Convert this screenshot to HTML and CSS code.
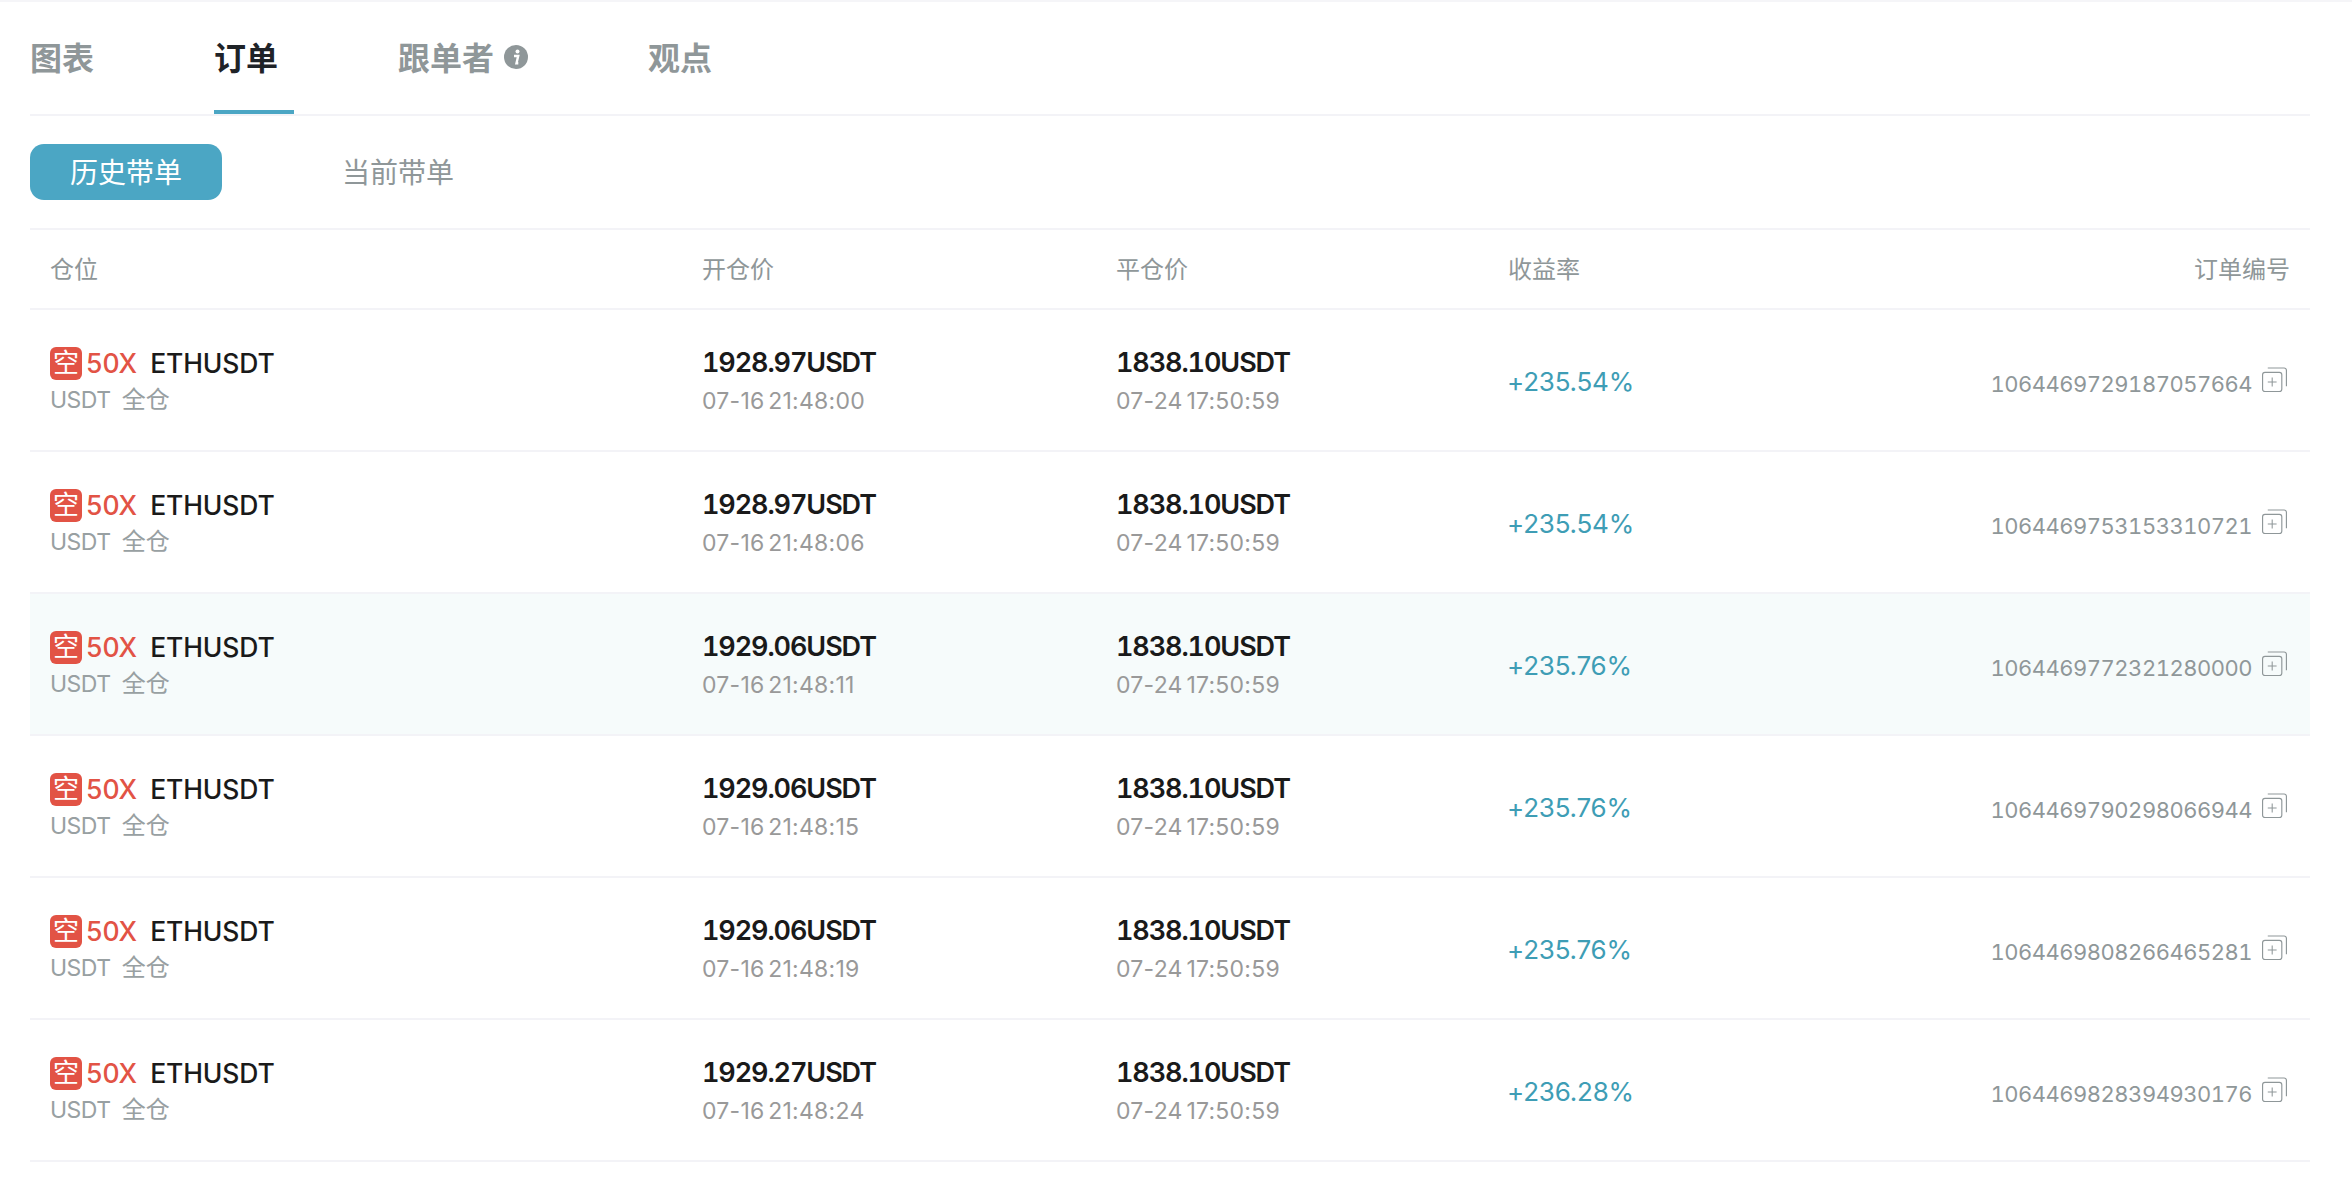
FILE: index.html
```html
<!DOCTYPE html>
<html lang="zh-CN">
<head>
<meta charset="utf-8">
<title>订单</title>
<link rel="stylesheet" href="styles.css">
</head>
<body>
<svg class="defs" width="0" height="0" aria-hidden="true">
  <symbol id="copy" viewBox="0 0 26 26">
    <rect x="0.6" y="5.6" width="20" height="20" rx="2.5" fill="none" stroke="currentColor" stroke-width="1.2"/>
    <path d="M6 1h17a2.4 2.4 0 0 1 2.4 2.4V20" fill="none" stroke="currentColor" stroke-width="1.2"/>
    <path d="M10.6 11v9.2M6 15.6h9.2" fill="none" stroke="currentColor" stroke-width="1.1"/>
  </symbol>
</svg>
<main class="page">
  <nav class="tabs">
    <a class="tab tab-chart">图表</a>
    <a class="tab tab-orders active">订单</a>
    <a class="tab tab-followers">跟单者
      <svg class="info" viewBox="0 0 24 24" aria-hidden="true"><circle cx="12" cy="12" r="12" fill="#8f9799"/><circle cx="13.5" cy="6.5" r="2" fill="#fff"/><path d="M10 11h4.2l-1.7 7.2h1.8" fill="none" stroke="#fff" stroke-width="2.4"/></svg>
    </a>
    <a class="tab tab-views">观点</a>
  </nav>
  <div class="subtabs">
    <a class="subtab on">历史带单</a>
    <a class="subtab">当前带单</a>
  </div>
  <div class="thead row-grid">
    <span>仓位</span><span>开仓价</span><span>平仓价</span><span>收益率</span><span class="right">订单编号</span>
  </div>
  <section class="row row-grid">
    <div><div class="pos"><span class="badge">空</span><span class="lev">50X</span><span class="sym">ETHUSDT</span></div><div class="sub"><span class="ccy">USDT</span>全仓</div></div>
    <div><div class="price">1928.97USDT</div><div class="time">07-16 21:48:00</div></div>
    <div><div class="price">1838.10USDT</div><div class="time">07-24 17:50:59</div></div>
    <div class="rate">+235.54%</div>
    <div class="id"><span>1064469729187057664</span><svg class="copy"><use href="#copy"/></svg></div>
  </section>
  <section class="row row-grid">
    <div><div class="pos"><span class="badge">空</span><span class="lev">50X</span><span class="sym">ETHUSDT</span></div><div class="sub"><span class="ccy">USDT</span>全仓</div></div>
    <div><div class="price">1928.97USDT</div><div class="time">07-16 21:48:06</div></div>
    <div><div class="price">1838.10USDT</div><div class="time">07-24 17:50:59</div></div>
    <div class="rate">+235.54%</div>
    <div class="id"><span>1064469753153310721</span><svg class="copy"><use href="#copy"/></svg></div>
  </section>
  <section class="row row-grid hover">
    <div><div class="pos"><span class="badge">空</span><span class="lev">50X</span><span class="sym">ETHUSDT</span></div><div class="sub"><span class="ccy">USDT</span>全仓</div></div>
    <div><div class="price">1929.06USDT</div><div class="time">07-16 21:48:11</div></div>
    <div><div class="price">1838.10USDT</div><div class="time">07-24 17:50:59</div></div>
    <div class="rate">+235.76%</div>
    <div class="id"><span>1064469772321280000</span><svg class="copy"><use href="#copy"/></svg></div>
  </section>
  <section class="row row-grid">
    <div><div class="pos"><span class="badge">空</span><span class="lev">50X</span><span class="sym">ETHUSDT</span></div><div class="sub"><span class="ccy">USDT</span>全仓</div></div>
    <div><div class="price">1929.06USDT</div><div class="time">07-16 21:48:15</div></div>
    <div><div class="price">1838.10USDT</div><div class="time">07-24 17:50:59</div></div>
    <div class="rate">+235.76%</div>
    <div class="id"><span>1064469790298066944</span><svg class="copy"><use href="#copy"/></svg></div>
  </section>
  <section class="row row-grid">
    <div><div class="pos"><span class="badge">空</span><span class="lev">50X</span><span class="sym">ETHUSDT</span></div><div class="sub"><span class="ccy">USDT</span>全仓</div></div>
    <div><div class="price">1929.06USDT</div><div class="time">07-16 21:48:19</div></div>
    <div><div class="price">1838.10USDT</div><div class="time">07-24 17:50:59</div></div>
    <div class="rate">+235.76%</div>
    <div class="id"><span>1064469808266465281</span><svg class="copy"><use href="#copy"/></svg></div>
  </section>
  <section class="row row-grid">
    <div><div class="pos"><span class="badge">空</span><span class="lev">50X</span><span class="sym">ETHUSDT</span></div><div class="sub"><span class="ccy">USDT</span>全仓</div></div>
    <div><div class="price">1929.27USDT</div><div class="time">07-16 21:48:24</div></div>
    <div><div class="price">1838.10USDT</div><div class="time">07-24 17:50:59</div></div>
    <div class="rate">+236.28%</div>
    <div class="id"><span>1064469828394930176</span><svg class="copy"><use href="#copy"/></svg></div>
  </section>
</main>
</body>
</html>
```
FILE: styles.css
```css
* { box-sizing: border-box; }
html, body { margin: 0; height: 100%; background: #fff; overflow: hidden; }
body { font-family: Inter, "Noto Sans CJK SC", sans-serif; color: #1a1a1a; }
.defs { position: absolute; }
.page { padding: 0 42px 0 30px; border-top: 2px solid #f5f5f8; }
.tabs { display: flex; height: 114px; border-bottom: 2px solid #f3f3f7; font-size: 32px; font-weight: 700; color: #8f9799; }
.tab { display: flex; align-items: center; height: 112px; padding-bottom: 4px; white-space: nowrap; }
.tab-chart { width: 184px; }
.tab-orders { width: 80px; margin-right: 104px; color: #1f2328; position: relative; }
.tab-orders.active::after { content: ""; position: absolute; left: 0; right: 0; bottom: 0; height: 4px; background: #4ba6c4; }
.tab-followers { width: 250px; gap: 10px; }
.info { width: 24px; height: 24px; margin-top: 2px; }
.subtabs { display: flex; height: 114px; padding-top: 28px; border-bottom: 2px solid #f3f3f7; align-items: flex-start; font-size: 28px; line-height: 1; color: #8f9799; }
.subtab { display: flex; justify-content: center; align-items: center; height: 56px; padding-top: 1px; }
.subtab.on { width: 192px; margin-right: 120px; color: #fff; background: #4ba6c4; border-radius: 14px; }
.row-grid { display: grid; grid-template-columns: 652px 414px 392px 1fr auto; padding: 0 20px; align-items: center; }
.thead { height: 80px; padding-bottom: 3px; border-bottom: 2px solid #f3f3f7; font-size: 24px; color: #8f9799; }
.right { text-align: right; }
.row { height: 142px; padding-top: 2px; border-bottom: 2px solid #f3f3f7; }
.row.hover { background: #f6fbfb; }
.pos { display: flex; align-items: center; height: 34px; font-size: 26.5px; font-weight: 500; }
.badge { display: flex; align-items: center; justify-content: center; width: 32px; height: 33px; border-radius: 6px; background: #e25345; color: #fff; font-size: 26px; font-weight: 400; line-height: 1; }
.lev { margin-left: 4px; color: #e25345; }
.sym { margin-left: 13px; letter-spacing: -0.1px; }
.sub { margin-top: 4px; font-size: 24px; line-height: 32px; color: #98a0a2; }
.ccy { margin-right: 11px; font-size: 23px; letter-spacing: -0.5px; }
.price { font-size: 27px; line-height: 34px; font-weight: 600; letter-spacing: -1.1px; font-variant-numeric: tabular-nums; }
.time { margin-top: 6px; font-size: 23px; line-height: 30px; color: #999; letter-spacing: 0.25px; word-spacing: -3px; }
.rate { font-size: 26px; color: #3e9db5; margin-left: -1px; letter-spacing: -0.2px; }
.id { display: flex; align-items: center; gap: 10px; padding: 6px 3px 0 0; font-size: 22px; color: #8f9799; font-variant-numeric: tabular-nums; }
.id span { letter-spacing: -0.5px; }
.copy { width: 25px; height: 25px; margin-top: -10px; color: #8f9799; }
```
